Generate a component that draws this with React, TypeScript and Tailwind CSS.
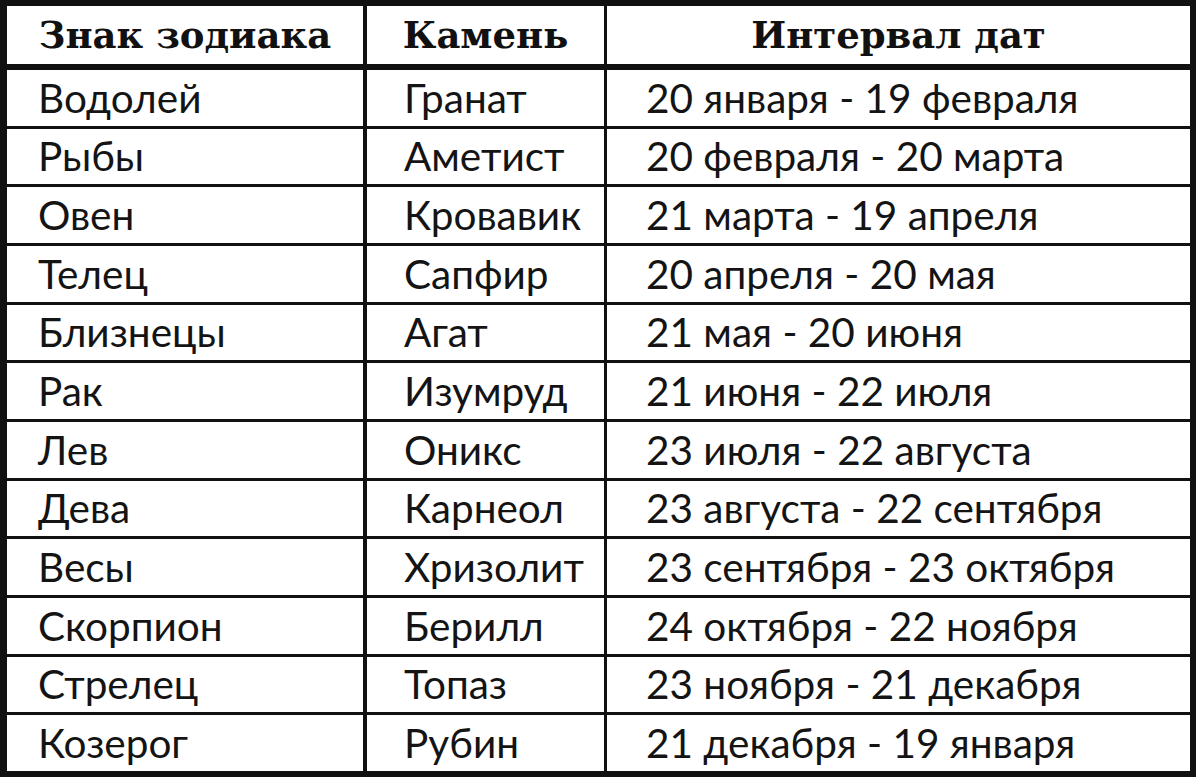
import React from 'react';

const rows: [string, string, string][] = [
  ['Водолей', 'Гранат', '20 января - 19 февраля'],
  ['Рыбы', 'Аметист', '20 февраля - 20 марта'],
  ['Овен', 'Кровавик', '21 марта - 19 апреля'],
  ['Телец', 'Сапфир', '20 апреля - 20 мая'],
  ['Близнецы', 'Агат', '21 мая - 20 июня'],
  ['Рак', 'Изумруд', '21 июня - 22 июля'],
  ['Лев', 'Оникс', '23 июля - 22 августа'],
  ['Дева', 'Карнеол', '23 августа - 22 сентября'],
  ['Весы', 'Хризолит', '23 сентября - 23 октября'],
  ['Скорпион', 'Берилл', '24 октября - 22 ноября'],
  ['Стрелец', 'Топаз', '23 ноября - 21 декабря'],
  ['Козерог', 'Рубин', '21 декабря - 19 января'],
];

const App: React.FC = () => {
  return (
    <div className="w-[1200px] h-[778px] bg-white">
      <div className="w-[1196px] h-[777px] flex flex-col border-l-[7px] border-t-[6px] border-r-[6px] border-b-[6px] border-[#111]">
        <div
          className="h-[64px] shrink-0 flex border-b-[6px] border-[#111] text-[#111] font-bold text-[37px] leading-none"
          style={{ fontFamily: '"DejaVu Serif", "Liberation Serif", serif' }}
        >
          <div className="w-[360px] flex items-center justify-center border-r-[4px] border-[#111]">
            Знак зодиака
          </div>
          <div className="w-[240px] flex items-center justify-center border-r-[3px] border-[#111]">
            Камень
          </div>
          <div className="flex-1 flex items-center justify-center">Интервал дат</div>
        </div>
        {rows.map(([sign, stone, dates], i) => (
          <div
            key={sign}
            className={`flex-1 min-h-0 flex text-[#141414] text-[40.5px] leading-none ${
              i < rows.length - 1 ? 'border-b-[3px] border-[#111]' : ''
            }`}
            style={{ fontFamily: 'Lato, "Open Sans", sans-serif' }}
          >
            <div className="w-[360px] flex items-center pl-[31px] border-r-[4px] border-[#111]">
              {sign}
            </div>
            <div className="w-[240px] flex items-center pl-[37px] border-r-[3px] border-[#111]">
              {stone}
            </div>
            <div className="flex-1 flex items-center pl-[39px]">{dates}</div>
          </div>
        ))}
      </div>
    </div>
  );
};

export default App;
